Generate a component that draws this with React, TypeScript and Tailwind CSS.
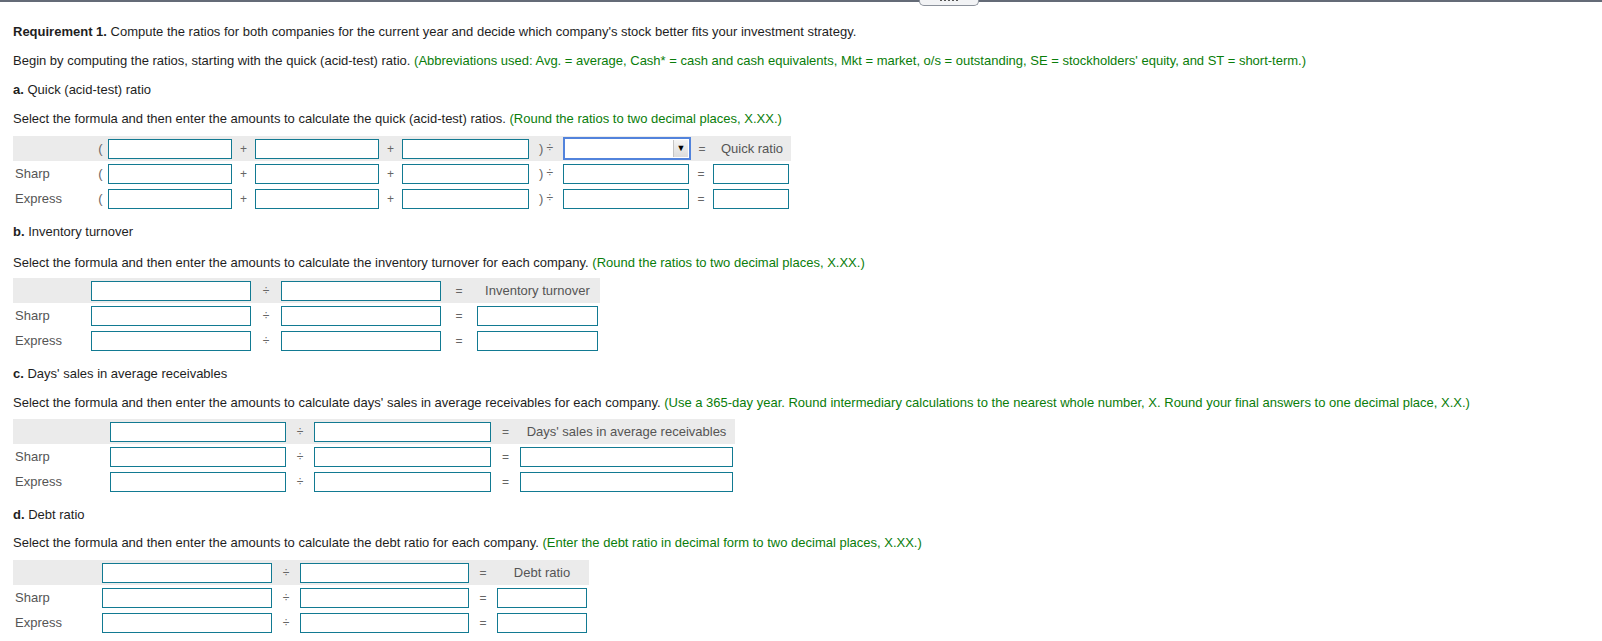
import React from "react";

const Inp = ({ w }: { w: string }) => (
  <div className={`${w} h-[20px] border border-[#127a92] bg-white shrink-0`} />
);

const Op = ({ w, children }: { w: string; children: React.ReactNode }) => (
  <div className={`${w} shrink-0 flex justify-center text-[#666] text-[12px]`}>{children}</div>
);

const Label = ({ w, children }: { w: string; children?: React.ReactNode }) => (
  <div className={`${w} shrink-0 pl-[2px] text-[#555]`}>{children}</div>
);

const Green = ({ children }: { children: React.ReactNode }) => (
  <span className="text-[#0a7d0a]">{children}</span>
);

const Title = ({ l, t }: { l: string; t: string }) => (
  <p className="mt-[13px] leading-[16px]">
    <b>{l}</b> {t}
  </p>
);

function Dropdown() {
  return (
    <div className="w-[128px] h-[23px] shrink-0 border-2 border-[#5283dc] bg-white flex justify-end items-center pr-[1px]">
      <div className="w-[15px] h-[17px] bg-gradient-to-b from-[#f4f4f4] to-[#dcdcdc] border-l border-[#c4c4c4] flex items-center justify-center text-[9px] text-black leading-none">
        ▼
      </div>
    </div>
  );
}

function SectionA() {
  const row = (label: string | null, header: boolean) => (
    <div className={`flex items-center h-[25px] ${header ? "bg-[#ebebeb] w-[778px]" : ""}`}>
      <Label w="w-[80px]">{label}</Label>
      <Op w="w-[15px]">
        <span className="text-[13px]">(</span>
      </Op>
      <Inp w="w-[124px]" />
      <Op w="w-[23px]">+</Op>
      <Inp w="w-[124px]" />
      <Op w="w-[23px]">+</Op>
      <Inp w="w-[127px]" />
      <div className="w-[34px] shrink-0 flex justify-center gap-[3px] text-[#666] text-[12px]">
        <span className="text-[13px]">)</span>
        <span>÷</span>
      </div>
      {header ? <Dropdown /> : <Inp w="w-[126px]" />}
      <Op w={header ? "w-[22px]" : "w-[24px]"}>=</Op>
      {header ? (
        <div className="w-[78px] shrink-0 text-center text-[#555]">Quick ratio</div>
      ) : (
        <Inp w="w-[76px]" />
      )}
    </div>
  );
  return (
    <div className="mt-[9px]">
      {row(null, true)}
      {row("Sharp", false)}
      {row("Express", false)}
    </div>
  );
}

type Cfg = {
  mt: string;
  band: string;
  label: string;
  in1: string;
  op1: string;
  in2: string;
  op2: string;
  res: string;
  head: string;
};

function TwoTable({ c }: { c: Cfg }) {
  const row = (label: string | null, header: boolean) => (
    <div className={`flex items-center h-[25px] ${header ? `bg-[#ebebeb] ${c.band}` : ""}`}>
      <Label w={c.label}>{label}</Label>
      <Inp w={c.in1} />
      <Op w={c.op1}>÷</Op>
      <Inp w={c.in2} />
      <Op w={c.op2}>=</Op>
      {header ? (
        <div className={`${c.res} shrink-0 text-center text-[#555] whitespace-nowrap`}>{c.head}</div>
      ) : (
        <Inp w={c.res} />
      )}
    </div>
  );
  return (
    <div className={c.mt}>
      {row(null, true)}
      {row("Sharp", false)}
      {row("Express", false)}
    </div>
  );
}

export default function App() {
  return (
    <div className="relative w-[1602px] h-[641px] overflow-hidden bg-white text-[13px] text-[#1e1e1e] font-['Liberation_Sans',Arial,sans-serif]">
      <div className="h-[2px] bg-[#646b77]" />
      <div className="absolute left-[919px] top-0 w-[60px] h-[6px] rounded-b-[5px] border border-t-0 border-[#8b919b] bg-[#f2f3f5] flex justify-center gap-[2px]">
        <span className="w-[2px] h-[1px] bg-[#555]" />
        <span className="w-[2px] h-[1px] bg-[#555]" />
        <span className="w-[2px] h-[1px] bg-[#555]" />
        <span className="w-[2px] h-[1px] bg-[#555]" />
        <span className="w-[2px] h-[1px] bg-[#555]" />
      </div>
      <div className="px-[13px] pt-[22px]">
        <p className="leading-[16px]">
          <b>Requirement 1.</b> Compute the ratios for both companies for the current year and decide which
          company's stock better fits your investment strategy.
        </p>
        <p className="mt-[13px] leading-[16px]">
          Begin by computing the ratios, starting with the quick (acid-test) ratio.{" "}
          <Green>
            (Abbreviations used: Avg. = average, Cash* = cash and cash equivalents, Mkt = market, o/s =
            outstanding, SE = stockholders' equity, and ST = short-term.)
          </Green>
        </p>

        <Title l="a." t="Quick (acid-test) ratio" />
        <p className="mt-[13px] leading-[16px]">
          Select the formula and then enter the amounts to calculate the quick (acid-test) ratios.{" "}
          <Green>(Round the ratios to two decimal places, X.XX.)</Green>
        </p>
        <SectionA />

        <Title l="b." t="Inventory turnover" />
        <p className="mt-[15px] leading-[16px]">
          Select the formula and then enter the amounts to calculate the inventory turnover for each company.{" "}
          <Green>(Round the ratios to two decimal places, X.XX.)</Green>
        </p>
        <TwoTable
          c={{
            mt: "mt-[7px]",
            band: "w-[587px]",
            label: "w-[78px]",
            in1: "w-[160px]",
            op1: "w-[30px]",
            in2: "w-[160px]",
            op2: "w-[36px]",
            res: "w-[121px]",
            head: "Inventory turnover",
          }}
        />

        <Title l="c." t="Days' sales in average receivables" />
        <p className="mt-[13px] leading-[16px]">
          Select the formula and then enter the amounts to calculate days' sales in average receivables for each
          company.{" "}
          <Green>
            (Use a 365-day year. Round intermediary calculations to the nearest whole number, X. Round your final
            answers to one decimal place, X.X.)
          </Green>
        </p>
        <TwoTable
          c={{
            mt: "mt-[8px]",
            band: "w-[722px]",
            label: "w-[97px]",
            in1: "w-[176px]",
            op1: "w-[28px]",
            in2: "w-[177px]",
            op2: "w-[29px]",
            res: "w-[213px]",
            head: "Days' sales in average receivables",
          }}
        />

        <Title l="d." t="Debt ratio" />
        <p className="mt-[12px] leading-[16px]">
          Select the formula and then enter the amounts to calculate the debt ratio for each company.{" "}
          <Green>(Enter the debt ratio in decimal form to two decimal places, X.XX.)</Green>
        </p>
        <TwoTable
          c={{
            mt: "mt-[9px]",
            band: "w-[576px]",
            label: "w-[89px]",
            in1: "w-[170px]",
            op1: "w-[28px]",
            in2: "w-[169px]",
            op2: "w-[28px]",
            res: "w-[90px]",
            head: "Debt ratio",
          }}
        />
      </div>
    </div>
  );
}
